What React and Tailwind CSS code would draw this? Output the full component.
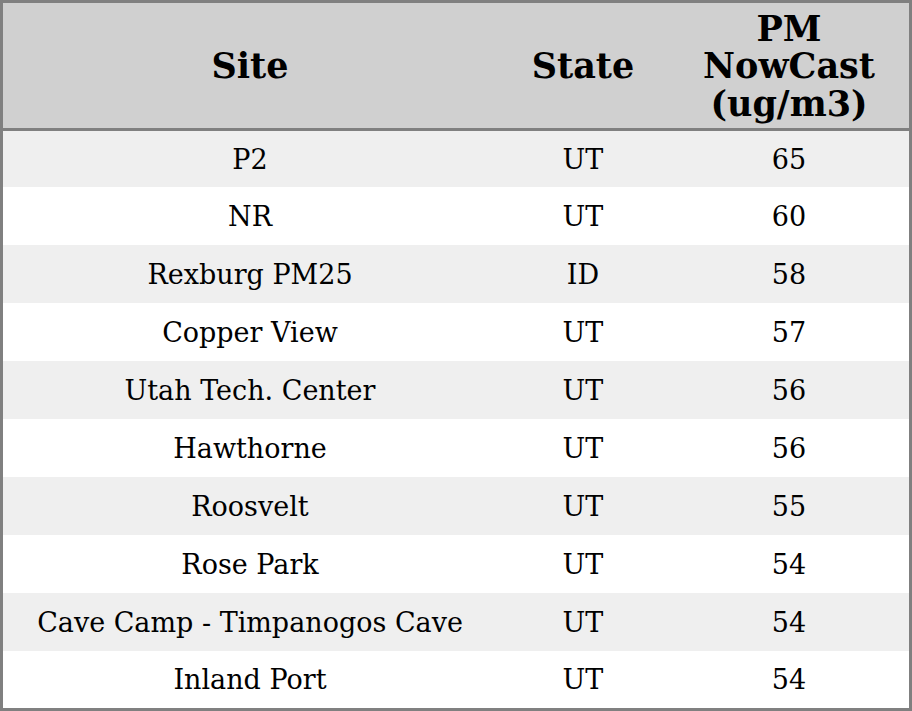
import React from 'react'

const ROWS = [
  ['P2', 'UT', 65],
  ['NR', 'UT', 60],
  ['Rexburg PM25', 'ID', 58],
  ['Copper View', 'UT', 57],
  ['Utah Tech. Center', 'UT', 56],
  ['Hawthorne', 'UT', 56],
  ['Roosvelt', 'UT', 55],
  ['Rose Park', 'UT', 54],
  ['Cave Camp - Timpanogos Cave', 'UT', 54],
  ['Inland Port', 'UT', 54],
]

const HEIGHTS = ['h-[56px]', 'h-[58px]', 'h-[58px]', 'h-[58px]', 'h-[58px]', 'h-[58px]', 'h-[58px]', 'h-[58px]', 'h-[58px]', 'h-[57px]']

export default function App() {
  return (
    <div className="w-[912px] h-[711px] border-[3px] border-[#808080] bg-white text-black font-['DejaVu_Serif',serif]">
      {/* header */}
      <div className="grid grid-cols-[494px_172px_240px] h-[128px] bg-[#d0d0d0] border-b-[3px] border-[#808080] font-bold text-[35px] leading-[37.5px] pt-[1px]">
        <div className="flex items-center justify-center text-center">Site</div>
        <div className="flex items-center justify-center text-center">State</div>
        <div className="flex items-center justify-center text-center">PM<br />NowCast<br />(ug/m3)</div>
      </div>

      {/* rows */}
      {ROWS.map(([site, state, pm], i) => (
        <div key={i} className={`grid grid-cols-[494px_172px_240px] text-[27px] pt-[2px] ${HEIGHTS[i]} ${i % 2 === 0 ? 'bg-[#efefef]' : 'bg-white'}`}>
          <div className="flex items-center justify-center">{site}</div>
          <div className="flex items-center justify-center">{state}</div>
          <div className="flex items-center justify-center">{pm}</div>
        </div>
      ))}
    </div>
  )
}
